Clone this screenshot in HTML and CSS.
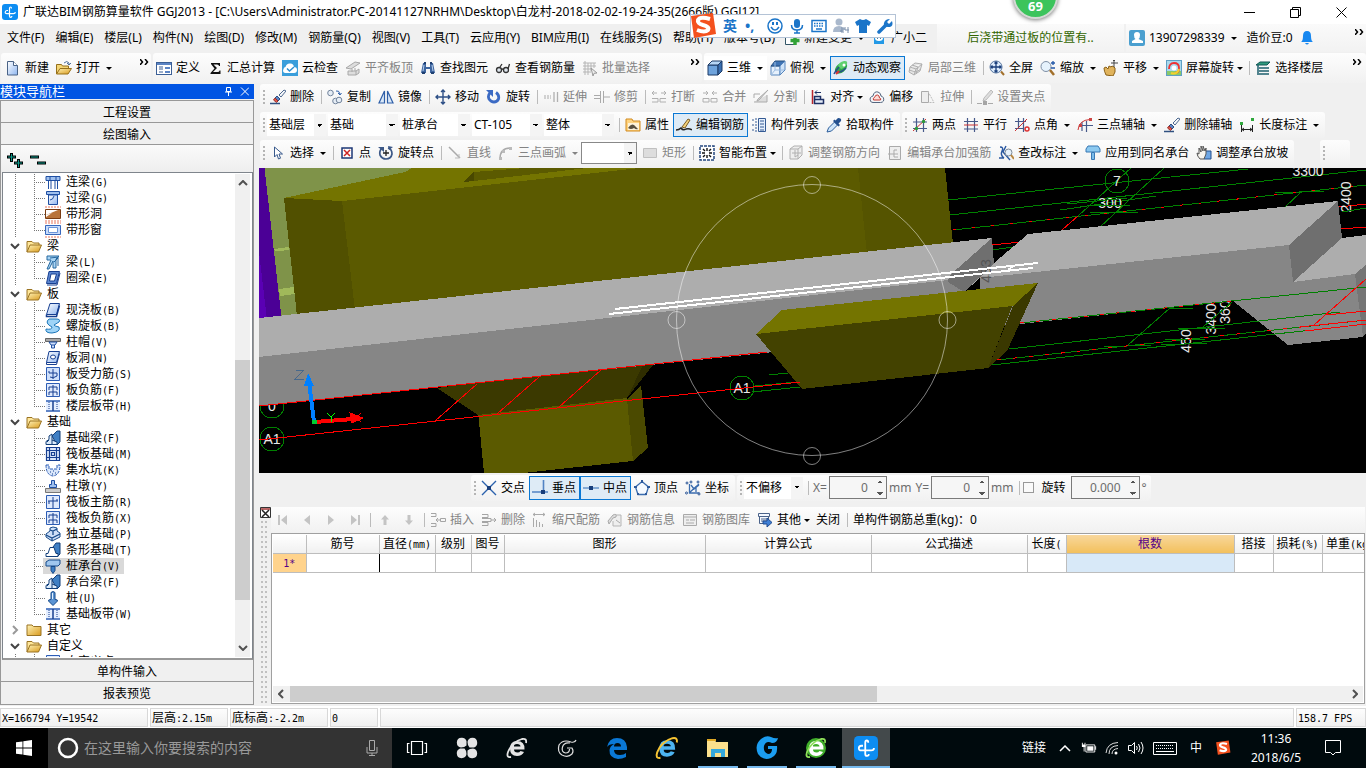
FILE: index.html
```html
<!DOCTYPE html>
<html lang="zh-CN">
<head>
    <meta charset="utf-8">
    <title>广联达BIM钢筋算量软件 GGJ2013</title>
    <link rel="stylesheet" href="styles.css">
</head>
<body>

<!-- icon sprite -->
<svg class="sprite" aria-hidden="true">
    <defs>
        <linearGradient id="gFold" x1="0" y1="0" x2="1" y2="1"><stop offset="0" stop-color="#fff3b8"/><stop offset="1" stop-color="#d99a1c"/></linearGradient>
        <linearGradient id="gBlue" x1="0" y1="0" x2="1" y2="1"><stop offset="0" stop-color="#fff"/><stop offset="1" stop-color="#8fb6f0"/></linearGradient>
    </defs>
    <symbol id="app" viewBox="0 0 16 16"><rect width="16" height="16" rx="3" fill="#0d8df2"/><path d="M9.500 4.500Q9.500 3 8.500 3T7.500 4.500V12q0 1.300 1.200 1.300T9.800 12M6 6.500H5Q3.200 6.700 3.200 8.200T5 9.600h6.500q1.800 0 1.800-1.600" fill="none" stroke="#fff" stroke-width="1.200"/></symbol>
    <symbol id="new" viewBox="0 0 16 16"><path d="M2.500 1.500h6l4 4v9.500h-10z" fill="url(#gBlue)" stroke="#4a6386"/><path d="M8.500 1.500v4h4" fill="#fff" stroke="#4a6386"/></symbol>
    <symbol id="open" viewBox="0 0 16 16"><path d="M.5 14V4.500h5l1 1.500h6v3" fill="#f4d574" stroke="#96701b"/><path d="M.5 14L4 8.500h11.500L12 14z" fill="url(#gFold)" stroke="#96701b"/><path d="M8 3q3-3 5 0v2m-2-2l2 2 2-2" fill="none" stroke="#4d6f9c"/></symbol>
    <symbol id="define" viewBox="0 0 16 16"><rect x=".5" y="2.500" width="15" height="12" fill="#fff" stroke="#3b5f96"/><path d="M1 3h14v2H1z" fill="#5b84c4"/><path d="M3 7h4M3 9h4M3 12h4" stroke="#3b5f96"/><path d="M9 7h5v2H9zM9 11h5v2H9z" fill="#5b84c4"/></symbol>
    <symbol id="sigma" viewBox="0 0 16 16"><path d="M4 3h9v3h-1q0-1.500-2-1.500H6.500L10 8l-4 4h4.500q2 0 2-1.500h1V14H3.500v-1L7.500 8.500 4 4z" fill="#111"/></symbol>
    <symbol id="cloud" viewBox="0 0 16 16"><rect width="16" height="16" fill="#3a9edb"/><path d="M3 13q-3-1-1.500-4 .5-2 2-2 1-4 5-3.500 3 0 3.500 3.500 3 0 3 3t-3 3z" fill="#fff"/><path d="M5 8.500l2.500 2.500L12 7" fill="none" stroke="#2f8fd0" stroke-width="1.500"/></symbol>
    <symbol id="flat" viewBox="0 0 16 16"><path d="M1 8L10 2l5 1-9 6zM3 11h8v4H3zM11 11l3-2v4l-3 2M7 9v3M10 8v3" fill="#ddd" stroke="#a8a8a8"/></symbol>
    <symbol id="bino" viewBox="0 0 16 16"><path d="M3 3h3v4h4V3h3l2 10h-5v-4H6v4H1z" fill="#3c649e"/><path d="M4 2h2v2H4zM10 2h2v2h-2zM2 12h3v2H2zM11 12h3v2h-3z" fill="#1f3f70"/><path d="M4 5l-1 6M12 5l1 6" stroke="#b9d0ee"/></symbol>
    <symbol id="glass" viewBox="0 0 16 16"><g fill="#dfe6ee" stroke="#333" stroke-width="1.300"><circle cx="4" cy="10" r="2.500"/><circle cx="11" cy="10" r="2.500"/><path d="M6.500 9.500q1-1 2 0M5 7l2-3M13 9l1.500-5" fill="none"/></g></symbol>
    <symbol id="batch" viewBox="0 0 16 16"><path d="M1 3h13M1 6h13M1 9h8M1 12h8M3 1v14M6 3v12M9 3v8M12 3v5" stroke="#b5b5b5"/><path d="M9 8l6 5-3 .3-1 2.700z" fill="#eee" stroke="#999"/></symbol>
    <symbol id="cube" viewBox="0 0 16 16"><path d="M1 5h10v10H1z" fill="#6ea3dc" stroke="#1d3b66"/><path d="M1 5l4-4h10l-4 4z" fill="#b7d6f5" stroke="#1d3b66"/><path d="M11 5l4-4v10l-4 4z" fill="#3b6fb0" stroke="#1d3b66"/></symbol>
    <symbol id="topview" viewBox="0 0 16 16"><path d="M1 6h9v9H1z" fill="#e7f1fc" stroke="#5685bd"/><path d="M1 6l4-5h10l-5 5z" fill="#3f74b5" stroke="#28507f"/><path d="M10 6l5-5v9l-5 5z" fill="#cfe3f8" stroke="#5685bd"/><path d="M5 2v8h9M5 10l-4 5" fill="none" stroke="#9dbde2"/></symbol>
    <symbol id="orbit" viewBox="0 0 16 16"><ellipse cx="8" cy="8" rx="7" ry="4.500" transform="rotate(-40 8 8)" fill="#2ea84c"/><path d="M5 6q1-4 6-5 4-.5 3 3-2 4-6 5" fill="#5fd070"/><path d="M1 14q2-4 5-7M2 11q5 3 11-3" fill="none" stroke="#274d8a" stroke-width="1.500"/><circle cx="11" cy="5" r="1.500" fill="#fff"/><path d="M3 14l3-3" stroke="#d33" stroke-width="2"/></symbol>
    <symbol id="part3d" viewBox="0 0 16 16"><path d="M2 7l5-4 7 1-2 7-6 4-5-3zM2 7l6 2 6-5M8 9l-2 6M4 5l6 2-2 7M1 10l7 2 5-3" fill="#e5e5e5" stroke="#b0b0b0"/></symbol>
    <symbol id="full" viewBox="0 0 16 16"><circle cx="7" cy="7" r="6" fill="#dcebfb" stroke="#52719c"/><path d="M7 2v10M2 7h10M5.500 3.500L7 2l1.500 1.500M5.500 10.500L7 12l1.500-1.500M3.500 5.500L2 7l1.500 1.500M10.500 5.500L12 7l-1.500 1.500" fill="none" stroke="#1b3f7c" stroke-width="1.300"/><path d="M12 11.500l3 3.500" stroke="#a2702b" stroke-width="2"/></symbol>
    <symbol id="zoom" viewBox="0 0 16 16"><circle cx="6" cy="6.500" r="5" fill="#e6f2fc" stroke="#7e8fa5"/><path d="M10 10l4 5" stroke="#a2702b" stroke-width="2.500"/><path d="M13 1v4M11 3h4M11 8h4" stroke="#2458a8" stroke-width="1.300"/></symbol>
    <symbol id="pan" viewBox="0 0 16 16"><path d="M3 15q-2-4-2-7l2-1 2 2 1-3 2 1 1-1 2 1 1 1v4l-2 4z" fill="#e0b35c" stroke="#8b6117"/><path d="M11 0v7M8 3h7M10 1l1-1 1 1" stroke="#444" fill="none"/></symbol>
    <symbol id="screenrot" viewBox="0 0 16 16"><rect x=".5" y=".5" width="15" height="15" fill="#a9d9ee" stroke="#5fa0c4"/><path d="M1 11h14v4H1z" fill="#8ac96a"/><path d="M3 9q0-6 5-6 5 0 5 5t-4 5" fill="none" stroke="#e33" stroke-width="1.800"/><path d="M5 13q6 2 8-4" fill="none" stroke="#f3d12e" stroke-width="2"/><circle cx="8" cy="8" r="2.500" fill="#fff"/></symbol>
    <symbol id="floors" viewBox="0 0 16 16"><path d="M1 5l4-3h10l-3 3z" fill="#2f9a7c" stroke="#155"/><path d="M4 8h10M4 11h10M4 14h10M3 5v10" stroke="#1d5f6e" stroke-width="1.500"/></symbol>
    <symbol id="brush" viewBox="0 0 16 16"><path d="M9 6l5-5 2 1-5 6z" fill="#f5f7fa" stroke="#4e688f"/><path d="M7 7l3 3-2 2-3-3z" fill="#5b83c2" stroke="#2d4c80"/><path d="M5 9l3 3-1.500 1.500L3.500 11z" fill="#e0574c" stroke="#98302a"/><path d="M0 14.500h10" stroke="#2f5080" stroke-width="1.500"/></symbol>
    <symbol id="copy" viewBox="0 0 16 16"><circle cx="3.500" cy="4" r="2.800" fill="#e6edf5" stroke="#71839b"/><circle cx="8.500" cy="12" r="2.800" fill="#e6edf5" stroke="#71839b"/><circle cx="12" cy="11" r="2.800" fill="#e6edf5" stroke="#71839b"/><path d="M9 2q3-1 4 3m-2-1l2 2 1.500-2" fill="none" stroke="#2f5fa8"/></symbol>
    <symbol id="mirror" viewBox="0 0 16 16"><path d="M6.500 2v12H1zM9.500 2v12H15z" fill="#dbe9f9" stroke="#2f5fa8" stroke-width="1.200"/></symbol>
    <symbol id="move" viewBox="0 0 16 16"><path d="M8 1v14M1 8h14M6 3l2-2 2 2M6 13l2 2 2-2M3 6L1 8l2 2M13 6l2 2-2 2" fill="none" stroke="#2d4f86" stroke-width="1.400"/></symbol>
    <symbol id="rotate" viewBox="0 0 16 16"><path d="M4 4q-2.500 2.500-1 6 2 3 5 3t4.500-3q1-4-2.500-6.500" fill="none" stroke="#3c6bc4" stroke-width="2.800"/><path d="M0 1h7v7z" fill="#3c6bc4"/></symbol>
    <symbol id="extend" viewBox="0 0 16 16"><path d="M1 7h7M1 9h7" stroke="#aaa" stroke-dasharray="2 1"/><path d="M11 3v10M14.500 3v10" stroke="#b0b0b0" stroke-width="1.300"/></symbol>
    <symbol id="trim" viewBox="0 0 16 16"><path d="M0 6.500h6M0 9.500h6M6.500 2v12M9.500 2v12M10 8h6" stroke="#aaa"/></symbol>
    <symbol id="break" viewBox="0 0 16 16"><path d="M1 4h5M10 4h5M3 2L1 4l2 2M13 2l2 2-2 2M1 9.500h6V13H1M15 9.500H9V13h6" fill="none" stroke="#b0b0b0"/></symbol>
    <symbol id="join" viewBox="0 0 16 16"><path d="M1 4h5M10 4h5M4 2l2 2-2 2M12 2l-2 2 2 2M1 9.500h6V13H1zM15 9.500H9V13h6z" fill="none" stroke="#b0b0b0"/></symbol>
    <symbol id="split" viewBox="0 0 16 16"><path d="M1 5h6M1 13h13V6M1 5v4M15 1L6 11l-2 1 1-2z" fill="#ddd" stroke="#aaa"/></symbol>
    <symbol id="align" viewBox="0 0 16 16"><path d="M2.500 1v14" stroke="#b8252b" stroke-width="1.500"/><path d="M5 3.500h6M5 3.500l2-2M5 3.500l2 2" fill="none" stroke="#1d2f63"/><path d="M4.500 7.500h6v3h-6zM4.500 10.500h9v4h-9z" fill="#e4ecf8" stroke="#1d2f63" stroke-width="1.500"/></symbol>
    <symbol id="offset" viewBox="0 0 16 16"><path d="M1.500 12Q0 8 4 7q1-5 5-4 3 1 3 4 3.500 1 2.500 5-1 1.500-3 1.500H4Q2 13.500 1.500 12z" fill="#f4f6f9" stroke="#53667f"/><path d="M4.500 11q-1-2 1-2.500Q6.500 5.500 8.500 6t2 3q2 .5 1 2z" fill="#fbdcd8" stroke="#c43b33"/></symbol>
    <symbol id="stretch" viewBox="0 0 16 16"><path d="M1.500 2.500h7v11h-7z" fill="#eee" stroke="#aaa"/><path d="M8 2.500l6 11H9" fill="none" stroke="#bbb" stroke-dasharray="2 1"/></symbol>
    <symbol id="grip" viewBox="0 0 16 16"><path d="M14 1L7 9l-1 3 3-1 7-8z" fill="#ddd" stroke="#bbb"/><path d="M0 14.500h5M11 14.500h5" stroke="#aaa"/><path d="M6 12h4v4H6z" fill="#a5a5a5"/></symbol>
    <symbol id="prop" viewBox="0 0 16 16"><path d="M1 2h6l1 2h7v10H1z" fill="#ffd480" stroke="#d18a1e"/><path d="M3 6h11v7H3z" fill="#fff3d8"/><path d="M3 11q3-5 6-3l4 4q-2 1-4-1-3 2-6 0" fill="#5a5140"/></symbol>
    <symbol id="pen" viewBox="0 0 16 16"><path d="M6 10l6-8 2 1-5 8z" fill="#f3d27a" stroke="#7b5a23"/><path d="M0 13q3 0 5-2 2 3 5 1 3-1 6 1" fill="none" stroke="#222" stroke-width="1.500"/></symbol>
    <symbol id="list" viewBox="0 0 16 16"><path d="M1 3h3M1 8h3M1 13h3M5 1v14" stroke="#345a94" stroke-dasharray="2 1"/><path d="M7.500 1.500h7v13h-7z" fill="#e5effc" stroke="#345a94"/><path d="M9 4h4M9 7h4M9 10h4M9 13h4" stroke="#345a94"/></symbol>
    <symbol id="pick" viewBox="0 0 16 16"><path d="M1 15l1.500-4 6-6 3 3-6 6z" fill="#cfe6fb" stroke="#2e5e9b"/><path d="M7 4l5.500 5.500 1.500-1.500-1.500-1.500L15 4q1-3-3-3L9.500 3.500 8.500 2.500z" fill="#24508f"/></symbol>
    <symbol id="ax2" viewBox="0 0 16 16"><path d="M4.500 1v14M11.500 1v14M1 5h14M1 11.500h14" stroke="#47598a" stroke-width="1.200"/><path d="M1 14L14 2" stroke="#c33"/><circle cx="4.500" cy="11.500" r="1.700" fill="#2b9a3a"/><circle cx="11.500" cy="4.500" r="1.700" fill="#2b9a3a"/></symbol>
    <symbol id="axpar" viewBox="0 0 16 16"><path d="M4.500 1v14M11.500 1v14M1 4.500h14M1 12h14" stroke="#47598a" stroke-width="1.200"/><path d="M1 8h14" stroke="#c33"/></symbol>
    <symbol id="axang" viewBox="0 0 16 16"><path d="M4.500 1v10M9.500 1v14M1 4.500h11M1 11.500h9" stroke="#47598a" stroke-width="1.200"/><path d="M1 14L13 2" stroke="#c33"/><circle cx="13" cy="12" r="2" fill="none" stroke="#d33" stroke-width="1.500"/></symbol>
    <symbol id="ax3" viewBox="0 0 16 16"><path d="M9.500 4v11M4 8.500h12M5 5v9" stroke="#47598a" stroke-width="1.200"/><path d="M1 13Q2 3 13 2.500" fill="none" stroke="#c33"/><path d="M2 7h3v3H2zM12 1h3v3h-3z" fill="#c44"/></symbol>
    <symbol id="dim" viewBox="0 0 16 16"><path d="M2.500 8v7M13.500 8v7M3 12.500h10M5 11l-2 1.500L5 14M11 11l2 1.500-2 1.500" fill="none" stroke="#222"/><path d="M1 5h3v3H1zM12 1h3v3h-3z" fill="#2fa83c"/></symbol>
    <symbol id="arrow" viewBox="0 0 16 16"><path d="M4.500 2v10l2.500-2.500L8.500 14l2-.8L9 9h3.500z" fill="#fff" stroke="#38598c"/></symbol>
    <symbol id="point" viewBox="0 0 16 16"><path d="M3 3h10v10H3z" fill="#fff" stroke="#1d3775" stroke-width="1.500"/><path d="M5 5l6 6M11 5l-6 6" stroke="#c22" stroke-width="1.500"/></symbol>
    <symbol id="rotpt" viewBox="0 0 16 16"><path d="M4 3Q1 6 2 10q2 4 6 4 5 0 6-5 0-5-4-6" fill="none" stroke="#3c5887" stroke-width="1.700"/><path d="M0 2h6v5M15 2l-5-1 1 4z" fill="#3c5887"/><path d="M8 5v6M5 8h6" stroke="#222" stroke-width="1.300"/></symbol>
    <symbol id="line" viewBox="0 0 16 16"><path d="M2 2l11 11" stroke="#aaa" stroke-width="1.500"/><path d="M12 9v4H8" fill="none" stroke="#bbb"/></symbol>
    <symbol id="arc" viewBox="0 0 16 16"><path d="M2 14Q2 3 12 3" fill="none" stroke="#aaa" stroke-width="1.500"/><path d="M1 12h3v3H1zM4 5h3v3H4zM11 2h3v3h-3z" fill="#bbb"/></symbol>
    <symbol id="rect" viewBox="0 0 16 16"><path d="M1.500 3.500h13v9h-13z" fill="#ddd" stroke="#c0c0c0"/></symbol>
    <symbol id="smart" viewBox="0 0 16 16"><rect x="1" y="1" width="14" height="14" fill="#fff" stroke="#24477f" stroke-width="1.500" stroke-dasharray="3 1"/><path d="M8 3v3M8 10v3M3 8h3M10 8h3M4 4l2 2M12 4l-2 2M4 12l2-2M12 12l-2-2" stroke="#111" stroke-width="1.400"/></symbol>
    <symbol id="rebar" viewBox="0 0 16 16"><path d="M2 4l4-3h8v9l-4 4H2zM2 4h8v10M10 4l4-3M4 8h9M7 5v7l3-2" fill="#eee" stroke="#b0b0b0"/></symbol>
    <symbol id="strong" viewBox="0 0 16 16"><path d="M2.500 1.500h11v13h-11zM1 9h10M7 5v7h4M7 5h3" fill="#eee" stroke="#aaa"/></symbol>
    <symbol id="check" viewBox="0 0 16 16"><path d="M2 2q4 0 2 4T6 13M8 1L5 7l7 8M1 13h5" fill="none" stroke="#2957a0" stroke-width="1.400"/><circle cx="10.500" cy="7.500" r="3.500" fill="#e6f1fb" stroke="#7c8896"/><path d="M13 10l3 4" stroke="#b98740" stroke-width="2"/></symbol>
    <symbol id="cap" viewBox="0 0 16 16"><path d="M1 4l2-3h10l2 3v3H1z" fill="#8cc9f0" stroke="#3878b4"/><path d="M6.500 7.500h3v7h-3z" fill="#7bbcea" stroke="#3878b4"/></symbol>
    <symbol id="slope" viewBox="0 0 16 16"><path d="M8 6h7v8H8z" fill="#6ea6e4" stroke="#234f8c"/><path d="M4 14q-3-3-3-6l2 1V3l2 4V1l2 5V1l2 5 1-3v6l-2 5z" fill="#f6f4ef" stroke="#555"/></symbol>
    <symbol id="cross" viewBox="0 0 16 16"><path d="M1 1l14 14M15 1L1 15" stroke="#2b62ad" stroke-width="1.400"/><path d="M6 6h4v4H6z" fill="#183e7b"/></symbol>
    <symbol id="perp" viewBox="0 0 16 16"><path d="M11.500 0v12M0 12h16" stroke="#5183c4" stroke-width="1.600"/><path d="M9 10h4v4H9z" fill="#183e7b"/></symbol>
    <symbol id="mid" viewBox="0 0 16 16"><path d="M0 8h16" stroke="#6d9ace" stroke-width="1.600"/><path d="M6 6h4v4H6z" fill="#183e7b"/></symbol>
    <symbol id="vertex" viewBox="0 0 16 16"><path d="M8 1.500L14.500 7 12 14.500H4L1.500 7z" fill="#f6faff" stroke="#3b6cae" stroke-width="1.300"/><path d="M7 0h2v3H7zM0 6h3v2H0zM13 6h3v2h-3zM3 13h2v2H3zM11 13h2v2h-2z" fill="#2d599b"/></symbol>
    <symbol id="coord" viewBox="0 0 16 16"><path d="M4.500 4v9h10M4 13L14 4M6 5l3 4 5-4M11 6v6" fill="none" stroke="#3b6cae" stroke-width="1.300"/><g fill="#fff" stroke="#244f92"><circle cx="2" cy="3" r="1"/><circle cx="6" cy="2" r="1"/><circle cx="13" cy="2" r="1"/><circle cx="1.500" cy="13" r="1"/><circle cx="14" cy="14" r="1"/></g></symbol>
    <symbol id="first" viewBox="0 0 16 16"><path d="M3 3h2v10H3zM12 3v10L6 8z" fill="#c4c4c4"/></symbol>
    <symbol id="prev" viewBox="0 0 16 16"><path d="M11 3v10L5 8z" fill="#c4c4c4"/></symbol>
    <symbol id="next" viewBox="0 0 16 16"><path d="M5 3v10l6-5z" fill="#c4c4c4"/></symbol>
    <symbol id="last" viewBox="0 0 16 16"><path d="M11 3h2v10h-2zM4 3v10l6-5z" fill="#c4c4c4"/></symbol>
    <symbol id="up" viewBox="0 0 16 16"><path d="M8 3l4 4.500h-2.500V13h-3V7.500H4z" fill="#c4c4c4"/></symbol>
    <symbol id="down" viewBox="0 0 16 16"><path d="M8 13l4-4.500h-2.500V3h-3v5.500H4z" fill="#c4c4c4"/></symbol>
    <symbol id="insert" viewBox="0 0 16 16"><path d="M1 1.500h5v3H1M1 11.500h5v3H1M10.500 6.500h5v3h-5zM6 8h4M8 6L6 8l2 2" fill="none" stroke="#a5a5a5"/></symbol>
    <symbol id="delrow" viewBox="0 0 16 16"><path d="M1 2.500h6v3H1M1 10.500h6v3H1M1 6.500h9v3H1M10 8h5M13 6l2 2-2 2" fill="none" stroke="#a5a5a5"/></symbol>
    <symbol id="scale" viewBox="0 0 16 16"><path d="M1 2.500h12M3 1L1 2.500 3 4M11 1l2 1.500L11 4M1.500 6v9M4.500 8v7M7.500 10v5M10.500 12v3" fill="none" stroke="#aaa"/></symbol>
    <symbol id="info" viewBox="0 0 16 16"><path d="M8 3h6v11H6V9" fill="#eee" stroke="#b5b5b5"/><path d="M1 9l5-6q4-2 3 2l-3 1-4 6zM9 8l4 3" fill="#ddd" stroke="#aaa"/></symbol>
    <symbol id="lib" viewBox="0 0 16 16"><path d="M1.500 2.500h13v11h-13zM2 5h12M4 8h3M8 8h5M4 11h8" fill="#eee" stroke="#aaa"/></symbol>
    <symbol id="other" viewBox="0 0 16 16"><path d="M1.500 1.500h11v3h-11zM2.500 4.500h9v7h-9zM4 7h6M4 9h6" fill="#f5f9ff" stroke="#4b638a"/><path d="M6 9h4V6l5 4.500L10 15v-3H6z" fill="#3f7fd6" stroke="#1f4b90"/></symbol>
    <symbol id="newchg" viewBox="0 0 16 16"><path d="M1.500 1.500h10v13h-10z" fill="#fff" stroke="#356"/><path d="M11 6v9M6.500 10.500h9" stroke="#31a236" stroke-width="3.500"/></symbol>
    <symbol id="robot" viewBox="0 0 16 16"><path d="M1 4h3l2-2h4l2 2h3v4h-2v6H3V8H1z" fill="#2399e6"/><ellipse cx="8" cy="8" rx="4" ry="3" fill="#fff"/><path d="M6 8h1M9 8h1" stroke="#157" stroke-width="1.500"/></symbol>
    <symbol id="user" viewBox="0 0 16 16"><rect width="16" height="16" rx="2" fill="#4a9fcf"/><path d="M8 2q3 0 3 3t-1.500 4L14 11v2H3v-2l3.500-2Q5 8 5 5t3-3z" fill="#fff"/></symbol>
    <symbol id="bell" viewBox="0 0 16 16"><path d="M2 12q2-1 2-6 0-5 4-5t4 5q0 5 2 6z" fill="#1787f0"/><path d="M6 13h4q-2 3-4 0z" fill="#1787f0"/></symbol>

    <!-- tree -->
    <symbol id="t-open" viewBox="0 0 16 16"><path d="M1 14V3.500h5l1.500 1.500H13V8" fill="#ffe79a" stroke="#9a7322"/><path d="M1 14l3-7h11.500L12.500 14z" fill="url(#gFold)" stroke="#9a7322"/></symbol>
    <symbol id="t-shut" viewBox="0 0 16 16"><path d="M1 13.500V3h5l1.500 1.500H15v9z" fill="url(#gFold)" stroke="#9a7322"/></symbol>
    <symbol id="t-link" viewBox="0 0 16 16"><path d="M1 2.500h14v4H1z" fill="#9fc0ee" stroke="#1f4fa3"/><path d="M3.500 6v9M6 6v9M10 6v9M12.500 6v9M5 2v4M11 2v4" stroke="#1f4fa3"/></symbol>
    <symbol id="t-lintel" viewBox="0 0 16 16"><path d="M1.500 1.500h13v3h-13z" fill="#9fc0ee" stroke="#1f4fa3"/><path d="M3.500 5h9v9.500h-9z" fill="url(#gBlue)" stroke="#1f4fa3"/><path d="M5 10q3 0 4-4" fill="none" stroke="#1f4fa3"/></symbol>
    <symbol id="t-hole" viewBox="0 0 16 16"><path d="M0 1h16M0 15h16" stroke="#f3b9ad" stroke-width="2" stroke-dasharray="2 1"/><path d="M.5 3.500h15v9H.5z" fill="#fff" stroke="#7a3c12"/><path d="M1 9l12-5h2v8H1z" fill="#b8733a"/><path d="M1 9l6-2-6 4z" fill="#fff"/></symbol>
    <symbol id="t-window" viewBox="0 0 16 16"><path d="M0 1h16M0 15h16" stroke="#f3b9ad" stroke-width="2" stroke-dasharray="2 1"/><path d="M.5 3.500h15v9H.5z" fill="#c9dcfa" stroke="#3767bd"/><path d="M3.500 5.500h9v5h-9z" fill="#fff" stroke="#6b94d8"/></symbol>
    <symbol id="t-beam" viewBox="0 0 16 16"><path d="M2 2h12l-3 3v9H8V7l-4 8H2l4-9H2z" fill="#a9d4f4" stroke="#27689f"/><path d="M5 4l9-1M9 8l4-4v8" stroke="#27689f" fill="none"/></symbol>
    <symbol id="t-ring" viewBox="0 0 16 16"><path d="M4 1.500h10.500l-3 12H1.500z" fill="#5d87d0" stroke="#173f91"/><path d="M6 4h5.500l-2 7H4.500z" fill="#fff" stroke="#173f91"/><path d="M2 15h10l3-12" fill="none" stroke="#173f91"/></symbol>
    <symbol id="t-slab" viewBox="0 0 16 16"><path d="M5 1.500h9.500l-3 11H1.500z" fill="url(#gBlue)" stroke="#173f91"/><path d="M1.500 12.500v2h10l3-11" fill="none" stroke="#173f91" stroke-width="1.500"/></symbol>
    <symbol id="t-spiral" viewBox="0 0 16 16"><path d="M4 1h7q5 0 3 3l-5 3q0 1 5 2 2 5-7 6Q0 15 1 11q6 1 6-2Q-1 5 4 1z" fill="#9ed4f7" stroke="#1d76b9"/></symbol>
    <symbol id="t-cap" viewBox="0 0 16 16"><path d="M.5 4.500h15v3H.5z" fill="#a8a8a8" stroke="#666"/><path d="M4 8h8l-2 3H6zM6.500 11v3h3v-3" fill="#cfe0fa" stroke="#1f4fa3"/></symbol>
    <symbol id="t-slabhole" viewBox="0 0 16 16"><path d="M4 1.500h10.500l-3 11H1.500z" fill="url(#gBlue)" stroke="#173f91"/><path d="M1.500 12.500v2h10l3-11" fill="none" stroke="#173f91"/><ellipse cx="8" cy="7" rx="2.500" ry="2" fill="#fff" stroke="#173f91"/></symbol>
    <symbol id="t-force" viewBox="0 0 16 16"><path d="M1.500 1.500h13v13h-13z" fill="#cfe0fb" stroke="#2d5db5"/><path d="M8 3v10M4 5v2h8v3q-4 3-7 1" fill="none" stroke="#173f91"/></symbol>
    <symbol id="t-neg" viewBox="0 0 16 16"><path d="M1.500 1.500h13v13h-13z" fill="#dfeafd" stroke="#2d5db5"/><path d="M4 5h8M4 10h8M8 3v11M4 5v3M12 5v3M4 10v3M12 10v3" stroke="#173f91"/></symbol>
    <symbol id="t-strip" viewBox="0 0 16 16"><path d="M1 3h14v9H1z" fill="#e4eeff"/><path d="M1 3h14M1 13h14" stroke="#2d5db5" stroke-width="1.600"/><path d="M4 4v8M12 4v8" stroke="#173f91" stroke-dasharray="1 1"/><path d="M8 3v10" stroke="#173f91" stroke-width="1.500"/></symbol>
    <symbol id="t-fbeam" viewBox="0 0 16 16"><path d="M7 6l5-5h3v11l-3 3z" fill="#3f7fc4" stroke="#123e78"/><path d="M1 14.500v-3l3-2V6l3-2v6l5 2v2.500z" fill="#dcebfb" stroke="#123e78"/><path d="M4 10l-2 2M7 10v4" stroke="#123e78"/></symbol>
    <symbol id="t-raft" viewBox="0 0 16 16"><path d="M1.500 1.500h13v13h-13zM4.500 1v14M11.500 1v14M1 4.500h14M1 11.500h14M6.500 6.500h3v3h-3z" fill="#dce8fb" stroke="#173f91" stroke-width="1.200"/></symbol>
    <symbol id="t-pit" viewBox="0 0 16 16"><path d="M1 3h3v4h8V3h3q0 10-7 11Q1 13 1 3z" fill="#d9e7fb" stroke="#2d5db5" stroke-dasharray="3 1"/><path d="M5 10h1M8 9h1M10 11h1M7 12h1" stroke="#173f91"/></symbol>
    <symbol id="t-pier" viewBox="0 0 16 16"><path d="M6.500 2.500h3v4h2v3h-7v-3h2z" fill="#9fc0ee" stroke="#1f4fa3"/><path d="M.5 10.500h15v4H.5z" fill="#ccc" stroke="#777"/></symbol>
    <symbol id="t-main" viewBox="0 0 16 16"><path d="M1.500 1.500h13v13h-13z" fill="#dfeafd" stroke="#2d5db5"/><path d="M8 3v11M3 7h10M4 7v3M12 7V5" stroke="#173f91"/></symbol>
    <symbol id="t-found" viewBox="0 0 16 16"><path d="M1 8l4-3V2l3-1 4 1v3l3 2v4l-8 4-6-4z" fill="#cfe0f8" stroke="#174a8a"/><path d="M5 4l3 1 4-2M8 5v4M1 9l6 3 8-4M7 12v3" fill="none" stroke="#174a8a" stroke-width="1.300"/></symbol>
    <symbol id="t-stripf" viewBox="0 0 16 16"><path d="M8 5l3-4h4v11l-3 3z" fill="#3f7fc4" stroke="#123e78"/><path d="M1 14.500v-3h2l2-6h4l2 6h2v3z" fill="#fff" stroke="#123e78"/></symbol>
    <symbol id="t-pilecap" viewBox="0 0 16 16"><path d="M1 4l3-2h11v4l-2 2H1z" fill="#9fc6ee" stroke="#174a8a"/><path d="M6 8.500h4v4l-2 3-2-3z" fill="#3f7fc4" stroke="#174a8a"/></symbol>
    <symbol id="t-pile" viewBox="0 0 16 16"><path d="M6 2.500q2-2 4 0v7q3 0 2.500 1.500L8 15.500 3.500 11Q3 9.500 6 9.500z" fill="#5b94d4" stroke="#174a8a"/><path d="M7.500 3v6" stroke="#e3f0fc"/></symbol>

    <!-- sogou / taskbar -->
    <symbol id="sogou" viewBox="0 0 28 26"><path d="M2 3L24 0l3 21-22 4z" fill="#f4511e"/><path d="M21 6q-10-3-12 1-1 3 5 5 7 2 5 5-3 3-11 0" fill="none" stroke="#fff" stroke-width="4"/></symbol>
    <symbol id="smile" viewBox="0 0 16 16"><g fill="none" stroke="#1b75c9" stroke-width="1.500"><circle cx="8" cy="8" r="7"/><path d="M4 9q4 6 8 0"/></g><path d="M5 4h2v3H5zM9 4h2v3H9z" fill="#1b75c9"/></symbol>
    <symbol id="mic" viewBox="0 0 16 16"><rect x="5" y="1" width="6" height="9" rx="3" fill="#1b75c9"/><path d="M2.500 7q0 5 5.500 5t5.500-5M8 12v3M5 15h6" fill="none" stroke="#1b75c9" stroke-width="1.500"/></symbol>
    <symbol id="kbd" viewBox="0 0 16 16"><path d="M1 2.500h14v11H1z" fill="none" stroke="#1b75c9" stroke-width="1.500"/><path d="M3 5.500h10M3 8h10" stroke="#1b75c9" stroke-width="1.500" stroke-dasharray="1.500 1"/><path d="M5 11h6" stroke="#1b75c9" stroke-width="1.500"/></symbol>
    <symbol id="man" viewBox="0 0 16 16"><circle cx="6" cy="4" r="3.500" fill="#a9b8cc"/><path d="M0 14q0-6 6-6 3 0 4 2v4z" fill="#a9b8cc"/><path d="M8 10h3v2H8v2h3M15 9v6M12 9v3h4" fill="none" stroke="#7b8fab"/></symbol>
    <symbol id="shirt" viewBox="0 0 16 16"><path d="M5 1q3 2 6 0l5 3-2 4-2-1v8H4V7L2 8 0 4z" fill="#1b75c9"/></symbol>
    <symbol id="wrench" viewBox="0 0 16 16"><path d="M2 14l7-7" stroke="#1b75c9" stroke-width="3.500" stroke-linecap="round"/><path d="M13 1l-3 3 2 2 3-3q2 6-4 6-5 0-4-4 1-4 6-4z" fill="#1b75c9"/></symbol>
    <symbol id="win" viewBox="0 0 16 16"><path d="M0 2.300L6.500 1.400v6.200H0zM7.300 1.300L16 0v7.600H7.300zM0 8.400h6.500v6.200L0 13.700zM7.300 8.400H16V16l-8.700-1.300z" fill="#fff"/></symbol>
    <symbol id="ring" viewBox="0 0 22 22"><circle cx="11" cy="11" r="9" fill="none" stroke="#fff" stroke-width="2.500"/></symbol>
    <symbol id="micline" viewBox="0 0 16 16"><path d="M5.500.5h5v10h-5zM3 7v6h10V7M8 13v3M5 15.500h6" fill="none" stroke="#aaa"/></symbol>
    <symbol id="taskview" viewBox="0 0 22 16"><path d="M5.500 1.500h11v13h-11zM3.500 3.500h-2v9h2M18.500 3.500h2v9h-2" fill="none" stroke="#fff" stroke-width="1.200"/></symbol>
    <symbol id="fan" viewBox="0 0 22 22"><g fill="#e4e4e4"><path d="M10.500 4Q9 .5 5.500.8 1 1 .8 5.500 1 10 5 10.500q3.500 0 5.500-2z"/><path d="M18 10.500q3.500-1.500 3.200-5Q21 1 16.500.8 12 1 11.500 5q0 3.500 2 5.500z"/><path d="M11.500 18q1.500 3.500 5 3.200 4.500-.2 4.700-4.700-.2-4.500-4.200-5-3.500 0-5.500 2z"/><path d="M4 11.500Q.5 13 .8 16.500 1 21 5.500 21.200 10 21 10.500 17q0-3.500-2-5.500z"/></g></symbol>
    <symbol id="ieface" viewBox="0 0 22 22"><path d="M18 15q-2 4-7 4-7 0-7-7.500T11 4q8 0 7.500 8.500H8q0 3 3.500 3 2 0 3-1.500l3.500 1zM8 9.500h6.500Q14.500 7 11 7T8 9.500z" fill="currentColor" fill-rule="evenodd"/></symbol>
    <symbol id="iering" viewBox="0 0 22 22"><path d="M20 6q1-5-4-4Q6 5 2 15q-2 6 3 5" fill="none" stroke="currentColor" stroke-width="1.800"/></symbol>
    <symbol id="gline" viewBox="0 0 22 22"><path d="M20 3q-1 3-5 2Q7 2 3 8q-2 7 3 10 6 3 10-1 2-3 0-6h-5M14 6Q8 5 6.500 10t3 6q4 0 4-4" fill="none" stroke="#ddd" stroke-width="1.200"/></symbol>
    <symbol id="gfull" viewBox="0 0 24 24"><path d="M23 2q-1 5-6 5-6-3-8 3-1 6 4 8 4 0 4-5h-4v-3h9q1 9-6 12-8 3-13-4-4-9 3-15 5-4 10-2 4 2 7 1z" fill="#1b9df0"/></symbol>
    <symbol id="edge" viewBox="0 0 22 22"><path d="M1 10Q3 1 11 1q9 0 10 9v3H8q0 5 6 5 4 0 6-2v4q-4 2-8 2-9-1-8.500-9Q4 9 8 7q-5 0-7 3zM8 9.500h7Q15 6 11.500 6 8 6 8 9.500z" fill="#0a78d6" fill-rule="evenodd"/></symbol>
    <symbol id="files" viewBox="0 0 22 20"><path d="M0 2h8l1 2h12v15H0z" fill="#fbe08c"/><path d="M0 1h9v2H0z" fill="#e0a925"/><path d="M4 19v-8h14v8h-4v-4H8v4z" fill="#34a8dc"/></symbol>
    <symbol id="plug" viewBox="0 0 18 14"><path d="M5.500 3.500h10v8h-10z" fill="none" stroke="#fff"/><path d="M7 5h7v5H7zM16 5h1v4h-1zM1 3h4v3H4v5H3V6H1zM1 1h1v2H1zM4 1h1v2H4z" fill="#fff"/></symbol>
    <symbol id="wifi" viewBox="0 0 14 14"><g fill="none" stroke="#ddd"><path d="M1 12Q2 2 13 1.500M4 13q0-8 9-8.500M7 13q0-5 6-5.500"/></g><circle cx="11" cy="12" r="1.500" fill="#fff"/></symbol>
    <symbol id="speaker" viewBox="0 0 17 14"><path d="M1 4.500h3l3-3v11l-3-3H1zM9 5q1.500 2 0 4M11 3q3 4 0 8M13.500 1q4 6 0 12" fill="none" stroke="#fff"/></symbol>
    <symbol id="touchkb" viewBox="0 0 24 14"><path d="M.5 1.500h23v12H.5z" fill="none" stroke="#fff"/><path d="M3 4.500h18M3 7.500h18" stroke="#fff" stroke-dasharray="1 1"/><path d="M3 10.500h18" stroke="#fff"/></symbol>
    <symbol id="note" viewBox="0 0 16 16"><path d="M.5.500h15v12h-5L8 15l-2.500-2.500h-5z" fill="none" stroke="#fff"/></symbol>
    <symbol id="more" viewBox="0 0 9 6"><path d="M0 0l2.500 3L0 6M5 0l2.500 3L5 6" fill="none" stroke="#000" stroke-width="1.500"/></symbol>
</svg>

<header class="titlebar">
    <svg class="i16"><use href="#app"/></svg>
    <h1>广联达BIM钢筋算量软件 GGJ2013 - [C:\Users\Administrator.PC-20141127NRHM\Desktop\白龙村-2018-02-02-19-24-35(2666版).GGJ12]</h1>
    <div class="winbtns">
        <button aria-label="最小化"><svg viewBox="0 0 11 11"><path d="M0 5.500h11"/></svg></button>
        <button aria-label="还原"><svg viewBox="0 0 11 11"><path d="M.5 2.500h8v8h-8zM2.500 2V.5h8v8H9"/></svg></button>
        <button aria-label="关闭"><svg viewBox="0 0 11 11"><path d="M.5.500l10 10M10.500.500l-10 10"/></svg></button>
    </div>
</header>
<div class="ball">69</div>
<div class="ime">
    <svg class="logo"><use href="#sogou"/></svg>
    <b>英</b><b>•,</b>
    <svg class="i16"><use href="#smile"/></svg>
    <svg class="i16"><use href="#mic"/></svg>
    <svg class="i16"><use href="#kbd"/></svg>
    <svg class="i16"><use href="#man"/></svg>
    <svg class="i16"><use href="#shirt"/></svg>
    <svg class="i16"><use href="#wrench"/></svg>
</div>

<nav class="menubar">
    <div class="menus">
        <button>文件(F)</button><button>编辑(E)</button><button>楼层(L)</button><button>构件(N)</button><button>绘图(D)</button><button>修改(M)</button><button>钢筋量(Q)</button><button>视图(V)</button><button>工具(T)</button><button>云应用(Y)</button><button>BIM应用(I)</button><button>在线服务(S)</button><button>帮助(H)</button><button>版本号(B)</button>
        <button class="tool"><svg><use href="#newchg"/></svg>新建变更<i class="caret split"></i></button>
        <button class="tool"><svg><use href="#robot"/></svg>广小二</button>
    </div>
    <div class="notice"><a href="#">后浇带通过板的位置有..</a></div>
    <div class="account">
        <button class="tool"><svg><use href="#user"/></svg>13907298339<i class="caret split"></i></button>
        <span>造价豆:0</span>
        <svg class="i16"><use href="#bell"/></svg>
        <svg class="more"><use href="#more"/></svg>
    </div>
</nav>

<div class="bar main">
    <div class="group file">
        <button class="tool"><svg><use href="#new"/></svg>新建</button>
        <button class="tool"><svg><use href="#open"/></svg>打开<i class="caret split"></i></button>
        <svg class="more"><use href="#more"/></svg>
    </div>
    <div class="group define">
        <button class="tool"><svg><use href="#define"/></svg>定义</button>
        <button class="tool"><svg><use href="#sigma"/></svg>汇总计算</button>
        <button class="tool"><svg><use href="#cloud"/></svg>云检查</button>
        <button class="tool" disabled><svg><use href="#flat"/></svg>平齐板顶</button>
        <button class="tool"><svg><use href="#bino"/></svg>查找图元</button>
        <button class="tool"><svg><use href="#glass"/></svg>查看钢筋量</button>
        <button class="tool" disabled><svg><use href="#batch"/></svg>批量选择</button>
        <svg class="more"><use href="#more"/></svg>
    </div>
    <div class="group view">
        <button class="tool white"><svg><use href="#cube"/></svg>三维<i class="caret split"></i></button>
        <button class="tool"><svg><use href="#topview"/></svg>俯视<i class="caret split"></i></button>
        <button class="tool on"><svg><use href="#orbit"/></svg>动态观察</button>
        <button class="tool" disabled><svg><use href="#part3d"/></svg>局部三维</button>
        <span class="sep"></span>
        <button class="tool"><svg><use href="#full"/></svg>全屏</button>
        <button class="tool"><svg><use href="#zoom"/></svg>缩放<i class="caret split"></i></button>
        <button class="tool"><svg><use href="#pan"/></svg>平移<i class="caret split"></i></button>
        <button class="tool"><svg><use href="#screenrot"/></svg>屏幕旋转<i class="caret"></i></button>
        <span class="sep"></span>
        <button class="tool"><svg><use href="#floors"/></svg>选择楼层</button>
        <svg class="more"><use href="#more"/></svg>
    </div>
</div>

<main>
    <aside>
        <h2>模块导航栏
            <svg viewBox="0 0 24 9"><path d="M1.500.500h4v4h-4zM0 5h7M3.500 5v4M16 .5l8 8M24 .5l-8 8"/></svg>
        </h2>
        <div class="panel">
            <button class="tab">工程设置</button>
            <button class="tab">绘图输入</button>
            <div class="expand">
                <svg viewBox="0 0 40 16"><g stroke="#000" stroke-width="3"><path d="M0 5h9M4.500 1v9M7 11h9M11.500 7v9M23 5h9M30 11h9"/></g><g stroke="#0a9a8c"><path d="M1 5h7M4.500 2v7M8 11h7M11.500 8v7M24 5h7M31 11h7"/></g></svg>
            </div>
            <div class="treebox">
                <ul class="tree">
                    <li><span><svg><use href="#t-link"/></svg>连梁<small>(G)</small></span></li>
                    <li><span><svg><use href="#t-lintel"/></svg>过梁<small>(G)</small></span></li>
                    <li><span><svg><use href="#t-hole"/></svg>带形洞</span></li>
                    <li class="end"><span><svg><use href="#t-window"/></svg>带形窗</span></li>
                    <li class="dir"><svg class="fold" viewBox="0 0 10 6"><path d="M1 1l4 4 4-4"/></svg><span><svg><use href="#t-open"/></svg>梁</span></li>
                    <li><span><svg><use href="#t-beam"/></svg>梁<small>(L)</small></span></li>
                    <li class="end"><span><svg><use href="#t-ring"/></svg>圈梁<small>(E)</small></span></li>
                    <li class="dir"><svg class="fold" viewBox="0 0 10 6"><path d="M1 1l4 4 4-4"/></svg><span><svg><use href="#t-open"/></svg>板</span></li>
                    <li><span><svg><use href="#t-slab"/></svg>现浇板<small>(B)</small></span></li>
                    <li><span><svg><use href="#t-spiral"/></svg>螺旋板<small>(B)</small></span></li>
                    <li><span><svg><use href="#t-cap"/></svg>柱帽<small>(V)</small></span></li>
                    <li><span><svg><use href="#t-slabhole"/></svg>板洞<small>(N)</small></span></li>
                    <li><span><svg><use href="#t-force"/></svg>板受力筋<small>(S)</small></span></li>
                    <li><span><svg><use href="#t-neg"/></svg>板负筋<small>(F)</small></span></li>
                    <li class="end"><span><svg><use href="#t-strip"/></svg>楼层板带<small>(H)</small></span></li>
                    <li class="dir"><svg class="fold" viewBox="0 0 10 6"><path d="M1 1l4 4 4-4"/></svg><span><svg><use href="#t-open"/></svg>基础</span></li>
                    <li><span><svg><use href="#t-fbeam"/></svg>基础梁<small>(F)</small></span></li>
                    <li><span><svg><use href="#t-raft"/></svg>筏板基础<small>(M)</small></span></li>
                    <li><span><svg><use href="#t-pit"/></svg>集水坑<small>(K)</small></span></li>
                    <li><span><svg><use href="#t-pier"/></svg>柱墩<small>(Y)</small></span></li>
                    <li><span><svg><use href="#t-main"/></svg>筏板主筋<small>(R)</small></span></li>
                    <li><span><svg><use href="#t-neg"/></svg>筏板负筋<small>(X)</small></span></li>
                    <li><span><svg><use href="#t-found"/></svg>独立基础<small>(P)</small></span></li>
                    <li><span><svg><use href="#t-stripf"/></svg>条形基础<small>(T)</small></span></li>
                    <li><span class="sel"><svg><use href="#t-pilecap"/></svg>桩承台<small>(V)</small></span></li>
                    <li><span><svg><use href="#t-fbeam"/></svg>承台梁<small>(F)</small></span></li>
                    <li><span><svg><use href="#t-pile"/></svg>桩<small>(U)</small></span></li>
                    <li class="end"><span><svg><use href="#t-strip"/></svg>基础板带<small>(W)</small></span></li>
                    <li class="dir"><svg class="fold shut" viewBox="0 0 10 10"><path d="M3 1l4 4-4 4"/></svg><span><svg><use href="#t-shut"/></svg>其它</span></li>
                    <li class="dir"><svg class="fold" viewBox="0 0 10 6"><path d="M1 1l4 4 4-4"/></svg><span><svg><use href="#t-open"/></svg>自定义</span></li>
                    <li><span><svg><use href="#t-main"/></svg>自定义点</span></li>
                </ul>
                <div class="vscroll">
                    <svg viewBox="0 0 10 6"><path d="M1 5l4-4 4 4"/></svg>
                    <div class="track"><div class="thumb"></div></div>
                    <svg viewBox="0 0 10 6"><path d="M1 1l4 4 4-4"/></svg>
                </div>
            </div>
            <button class="tab">单构件输入</button>
            <button class="tab">报表预览</button>
        </div>
    </aside>

    <section class="work">
        <div class="bars">
            <div class="bar">
                <div class="group">
                    <span class="dots"></span>
                    <button class="tool"><svg><use href="#brush"/></svg>删除</button>
                    <span class="sep"></span>
                    <button class="tool"><svg><use href="#copy"/></svg>复制</button>
                    <button class="tool"><svg><use href="#mirror"/></svg>镜像</button>
                    <span class="sep"></span>
                    <button class="tool"><svg><use href="#move"/></svg>移动</button>
                    <button class="tool"><svg><use href="#rotate"/></svg>旋转</button>
                    <span class="sep"></span>
                    <button class="tool" disabled><svg><use href="#extend"/></svg>延伸</button>
                    <button class="tool" disabled><svg><use href="#trim"/></svg>修剪</button>
                    <span class="sep"></span>
                    <button class="tool" disabled><svg><use href="#break"/></svg>打断</button>
                    <button class="tool" disabled><svg><use href="#join"/></svg>合并</button>
                    <button class="tool" disabled><svg><use href="#split"/></svg>分割</button>
                    <span class="sep"></span>
                    <button class="tool"><svg><use href="#align"/></svg>对齐<i class="caret"></i></button>
                    <button class="tool"><svg><use href="#offset"/></svg>偏移</button>
                    <button class="tool" disabled><svg><use href="#stretch"/></svg>拉伸</button>
                    <span class="sep"></span>
                    <button class="tool" disabled><svg><use href="#grip"/></svg>设置夹点</button>
                </div>
            </div>
            <div class="bar">
                <div class="group">
                    <span class="dots"></span>
                    <select class="short" aria-label="楼层"><option>基础层</option></select>
                    <select aria-label="构件类别"><option>基础</option></select>
                    <select aria-label="构件类型"><option>桩承台</option></select>
                    <select aria-label="构件名称"><option>CT-105</option></select>
                    <select aria-label="范围"><option>整体</option></select>
                    <span class="sep"></span>
                    <button class="tool"><svg><use href="#prop"/></svg>属性</button>
                    <button class="tool on"><svg><use href="#pen"/></svg>编辑钢筋</button>
                    <button class="tool"><svg><use href="#list"/></svg>构件列表</button>
                    <button class="tool"><svg><use href="#pick"/></svg>拾取构件</button>
                </div>
                <div class="group">
                    <span class="dots"></span>
                    <button class="tool"><svg><use href="#ax2"/></svg>两点</button>
                    <button class="tool"><svg><use href="#axpar"/></svg>平行</button>
                    <button class="tool"><svg><use href="#axang"/></svg>点角<i class="caret split"></i></button>
                    <button class="tool"><svg><use href="#ax3"/></svg>三点辅轴<i class="caret split"></i></button>
                    <button class="tool"><svg><use href="#brush"/></svg>删除辅轴</button>
                    <button class="tool"><svg><use href="#dim"/></svg>长度标注<i class="caret split"></i></button>
                </div>
            </div>
            <div class="bar">
                <div class="group">
                    <span class="dots"></span>
                    <button class="tool"><svg><use href="#arrow"/></svg>选择<i class="caret split"></i></button>
                    <span class="sep"></span>
                    <button class="tool"><svg><use href="#point"/></svg>点</button>
                    <button class="tool"><svg><use href="#rotpt"/></svg>旋转点</button>
                    <span class="sep"></span>
                    <button class="tool" disabled><svg><use href="#line"/></svg>直线</button>
                    <button class="tool" disabled><svg><use href="#arc"/></svg>三点画弧<i class="caret split"></i></button>
                    <select class="boxed" disabled aria-label="弧参数"><option></option></select>
                    <button class="tool" disabled><svg><use href="#rect"/></svg>矩形</button>
                    <span class="sep"></span>
                    <button class="tool"><svg><use href="#smart"/></svg>智能布置<i class="caret"></i></button>
                    <span class="sep"></span>
                    <button class="tool" disabled><svg><use href="#rebar"/></svg>调整钢筋方向</button>
                    <button class="tool" disabled><svg><use href="#strong"/></svg>编辑承台加强筋</button>
                    <button class="tool"><svg><use href="#check"/></svg>查改标注<i class="caret split"></i></button>
                    <button class="tool"><svg><use href="#cap"/></svg>应用到同名承台</button>
                    <button class="tool"><svg><use href="#slope"/></svg>调整承台放坡</button>
                </div>
                <div class="group stub"><span class="dots"></span></div>
            </div>
        </div>

        <svg class="scene" viewBox="259 168 1107 305" preserveAspectRatio="xMinYMin slice" shape-rendering="crispEdges">
            <rect x="259" y="168" width="1107" height="305" fill="#000"/>
            <!-- walls behind -->
            <path d="M259 168h153l-7 4-121 26 13 118-38 4z" fill="#7f9349"/>
            <path d="M274 249l15-2v3l-14 1.500zM279 289l15-2 1 7-15 2z" fill="#a0b95a"/>
            <path d="M259 168h5.500l17 150-22.500 3z" fill="#4b0096"/>
            <path d="M259 252l8 68-8 1z" fill="#5a00b4"/>
            <!-- pile cap at the back -->
            <path d="M342 201l298-33h305l8 76-598 66z" fill="#5b5a00"/>
            <path d="M858 168h87l8 76-86 10z" fill="#555400"/>
            <path d="M284 198l58 3 13 109-58 6z" fill="#515000"/>
            <path d="M284 198l121-26 7-4h228l-298 33z" fill="#747400"/>
            <path d="M474 172l51-4h62l-113 13z" fill="#5b5a00"/>
            <path d="M463 182l11-10v9z" fill="#494800"/>
            <!-- axis grid, upper right -->
            <g fill="none" stroke="#008000">
                <path d="M948 200l300-31M950 215l416-45M953 230l413-45M992 250l21-3M1342 212l24-4M1131 168l-53 48M1164 168l-64 59M1301 192l-16 15M1067 204l60-6M1060 210l96-14M1090 212h48M1275 193l49-2"/>
                <circle cx="1117" cy="181" r="12"/>
                <circle cx="272" cy="406" r="12"/>
                <circle cx="272" cy="439" r="12"/>
                <circle cx="742" cy="388" r="12"/>
                <path d="M769 375l19-2M755 386l42-4M752 392l48-5"/>
            </g>
            <path d="M953 230l413-45" stroke="#f00" stroke-dasharray="3 16"/>
            <path d="M992 245l28-3M1339 207l27-3M1341 229l25-2M1078 216l-16 14" stroke="#f00"/>
            <g class="tag">
                <text x="1117" y="186">7</text>
                <text x="1110" y="208">300</text>
                <text x="1308" y="176">3300</text>
                <text x="1346" y="197" transform="rotate(-90 1346 197)" dy="5">2400</text>
                <text x="272" y="411">0</text>
                <text x="272" y="444">A1</text>
                <text x="742" y="393">A1</text>
            </g>
            <path d="M1067 204l60-6M1342 212l24-4M1090 205h40" stroke="#008000"/>
            <!-- right beams -->
            <path d="M980 270l309-33 4 37 62-8 8 71-75 8-55-44-213 23-40 4z" fill="#868686"/>
            <path d="M1028 234l310-33-49 44-309 33-16 14-10-5 40-24z" fill="#adadad"/>
            <path d="M1338 201l4 37-49 44-4-37z" fill="#6f6f6f"/>
            <path d="M1293 282l49-44 24-3v30l-11 9z" fill="#adadad"/>
            <path d="M1355 274l11-9v68l-3 4z" fill="#757575"/>
            <!-- pile under the beam -->
            <path d="M478 412l149-17 6 66-110 12h-39z" fill="#5b5a00"/>
            <path d="M627 399l14-14 7 63-15 13z" fill="#4b4a00"/>
            <path d="M437 388l220-30-30 40-149 17z" fill="#3b3900"/>
            <path d="M643 365l14-5-30 38z" fill="#2f2d00"/>
            <!-- main beam -->
            <path d="M259 350l690-77 17 19-20 42-687 72z" fill="#868686"/>
            <path d="M259 318l733-80-44 42-689 77z" fill="#adadad"/>
            <path d="M992 238l2 26-30 28-16-10 1-6z" fill="#6f6f6f"/>
            <!-- front pile cap -->
            <path d="M756 334l257-30-25 64-186 21z" fill="#434200"/>
            <path d="M1013 306l25-23-31 68-19 17z" fill="#3a3800"/>
            <path d="M756 334l26-24 256-27-25 23z" fill="#747400"/>
            <path d="M259 406l508-54" stroke="#f00" stroke-width="1"/>
            <path d="M259 440l541-58M435 421l42-37M497 414l42-37M559 407l42-37" stroke="#f00"/>
            <!-- axis grid, lower right -->
            <g class="tag">
                <text x="1186" y="341" transform="rotate(-90 1186 341)" dy="5">450</text>
                <text x="1211" y="319" transform="rotate(-90 1211 319)" dy="5">3400</text>
                <text x="1225" y="312" transform="rotate(-90 1225 312)" dy="5">360</text>
                <text x="986" y="271" transform="rotate(-90 986 271)" dy="5" class="dim">433</text>
            </g>
            <path d="M1020 323l346-36M1009 349l331-37M997 360l369-40M992 365l320-35M1170 308l-42 37M1232 302l-29 25M1161 345l46-2M1165 339h40M1104 347l47-2M1178 328h47M1169 308h24" fill="none" stroke="#008000"/>
            <path d="M1020 323l213-22M997 360l369-40" stroke="#f00" stroke-dasharray="4 12"/>
            <path d="M1326 315l40-4M1300 327l66-7M1305 331l61-7M1366 279l-52 46" stroke="#f00"/>
            <!-- selected rebars -->
            <path d="M615 309l423-46M609 314l424-46M1008 270l5-4" stroke="#fff" stroke-width="2"/>
            <!-- orbit handle -->
            <g fill="none" stroke="#fff" stroke-opacity=".5" shape-rendering="auto">
                <circle cx="812" cy="320" r="135.500"/>
                <circle cx="812" cy="185" r="8.500"/>
                <circle cx="812" cy="456" r="8.500"/>
                <circle cx="676.500" cy="320" r="8.500"/>
                <circle cx="947.500" cy="320" r="8.500"/>
            </g>
            <!-- ucs -->
            <path d="M314 422l-5-40" stroke="#0080ff" stroke-width="4"/>
            <path d="M308 373l6 13h-10z" fill="#0080ff"/>
            <path d="M296 370h8l-9 9h9" fill="none" stroke="#46688c"/>
            <path d="M315 422l38-3" stroke="#f00" stroke-width="4"/>
            <path d="M363 418l-13-5 2 10zM352 413l9 9M361 413l-9 9" fill="#f00" stroke="#f00"/>
            <path d="M327 413l4 4 4-4M331 417v5" fill="none" stroke="#0f0"/>
            <path d="M312 420h5v4h-5z" fill="#0c3"/>
        </svg>

        <div class="bar snap">
            <div class="group">
                <span class="dots"></span>
                <button class="tool"><svg><use href="#cross"/></svg>交点</button>
                <button class="tool on"><svg><use href="#perp"/></svg>垂点</button>
                <button class="tool on"><svg><use href="#mid"/></svg>中点</button>
                <button class="tool"><svg><use href="#vertex"/></svg>顶点</button>
                <button class="tool"><svg><use href="#coord"/></svg>坐标</button>
            </div>
            <div class="group">
                <span class="dots"></span>
                <select class="short" aria-label="偏移方式"><option>不偏移</option></select>
                <span class="sep"></span>
                <label for="ox">X=</label><span class="spin"><input id="ox" value="0" disabled><i></i></span><span class="unit">mm</span>
                <label for="oy">Y=</label><span class="spin"><input id="oy" value="0" disabled><i></i></span><span class="unit">mm</span>
                <span class="sep"></span>
                <input type="checkbox" id="rot"><label for="rot" class="dark">旋转</label>
                <span class="spin wide"><input value="0.000" disabled aria-label="角度"><i></i></span><span class="unit">°</span>
            </div>
        </div>

        <div class="bottom">
            <div class="rail"><svg viewBox="0 0 11 11"><path d="M.5.500h10v10H.5z" fill="#fff" stroke="#333"/><path d="M1 1h9v2H1z" fill="#b66"/><path d="M2 3l7 7M9 3l-7 7" stroke="#222" stroke-width="1.500"/></svg></div>
            <div class="detail">
                <div class="bar">
                    <button class="tool nav" disabled aria-label="首条"><svg><use href="#first"/></svg></button>
                    <button class="tool nav" disabled aria-label="上一条"><svg><use href="#prev"/></svg></button>
                    <button class="tool nav" disabled aria-label="下一条"><svg><use href="#next"/></svg></button>
                    <button class="tool nav" disabled aria-label="末条"><svg><use href="#last"/></svg></button>
                    <span class="sep"></span>
                    <button class="tool nav" disabled aria-label="上移"><svg><use href="#up"/></svg></button>
                    <button class="tool nav" disabled aria-label="下移"><svg><use href="#down"/></svg></button>
                    <span class="sep"></span>
                    <button class="tool" disabled><svg><use href="#insert"/></svg>插入</button>
                    <button class="tool" disabled><svg><use href="#delrow"/></svg>删除</button>
                    <button class="tool" disabled><svg><use href="#scale"/></svg>缩尺配筋</button>
                    <button class="tool" disabled><svg><use href="#info"/></svg>钢筋信息</button>
                    <button class="tool" disabled><svg><use href="#lib"/></svg>钢筋图库</button>
                    <button class="tool"><svg><use href="#other"/></svg>其他<i class="caret"></i></button>
                    <button class="tool">关闭</button>
                    <span class="sep"></span>
                    <span class="total">单构件钢筋总重(kg)：0</span>
                </div>
                <div class="sheet">
                    <table>
                        <colgroup><col class="w33"><col class="w73"><col class="w56"><col class="w36"><col class="w33"><col class="w201"><col class="w166"><col class="w156"><col class="w39"><col class="w168"><col class="w39"><col class="w49"><col class="w56"></colgroup>
                        <thead>
                            <tr><th></th><th>筋号</th><th>直径<small>(mm)</small></th><th>级别</th><th>图号</th><th>图形</th><th>计算公式</th><th>公式描述</th><th>长度<small>(</small></th><th class="cur">根数</th><th>搭接</th><th>损耗<small>(%)</small></th><th>单重<small>(kg)</small></th></tr>
                        </thead>
                        <tbody>
                            <tr><th><small>1*</small></th><td class="edit"></td><td></td><td></td><td></td><td></td><td></td><td></td><td></td><td class="cur"></td><td></td><td></td><td></td></tr>
                        </tbody>
                    </table>
                    <div class="hscroll">
                        <svg viewBox="0 0 6 10"><path d="M5 1L1 5l4 4"/></svg>
                        <div class="track"><div class="thumb"></div></div>
                        <svg viewBox="0 0 6 10"><path d="M1 1l4 4-4 4"/></svg>
                    </div>
                </div>
            </div>
        </div>
    </section>
</main>

<footer class="status">
    <span class="s-xy"><small>X=166794 Y=19542</small></span><span class="s-h">层高<small>:2.15m</small></span><span class="s-b">底标高<small>:-2.2m</small></span><span class="s-n"><small>0</small></span><span class="s-fill"></span><span class="s-fps"><small>158.7 FPS</small></span>
</footer>

<div class="taskbar">
    <button class="start" aria-label="开始"><svg class="i16"><use href="#win"/></svg></button>
    <label class="search"><svg class="i22"><use href="#ring"/></svg><input type="text" placeholder="在这里输入你要搜索的内容"><svg class="i16"><use href="#micline"/></svg></label>
    <button class="task" aria-label="任务视图"><svg class="i22"><use href="#taskview"/></svg></button>
    <button class="task" aria-label="风扇"><svg class="i22"><use href="#fan"/></svg></button>
    <button class="task" aria-label="浏览器"><svg class="i22"><use href="#ieface"/><use href="#iering"/></svg></button>
    <button class="task" aria-label="广联达"><svg class="i22"><use href="#gline"/></svg></button>
    <button class="task" aria-label="Edge"><svg class="i22"><use href="#edge"/></svg></button>
    <button class="task ie" aria-label="Internet Explorer"><svg class="i24b"><use href="#ieface"/><use href="#iering" class="gold"/></svg></button>
    <button class="task run" aria-label="文件资源管理器"><svg class="i22"><use href="#files"/></svg></button>
    <button class="task run" aria-label="G"><svg class="i24b"><use href="#gfull"/></svg></button>
    <button class="task run green" aria-label="安全浏览器"><svg class="i22"><circle cx="11" cy="11" r="10" fill="#3fae2a"/><use href="#ieface"/><use href="#iering" class="lime"/></svg></button>
    <button class="task run active" aria-label="GGJ2013"><svg class="i24b"><use href="#app"/></svg></button>
    <div class="tray">
        <span>链接</span>
        <svg class="chev" viewBox="0 0 12 7"><path d="M1 6l5-5 5 5"/></svg>
        <svg class="i16"><use href="#plug"/></svg>
        <svg class="i14"><use href="#wifi"/></svg>
        <svg class="i18"><use href="#speaker"/></svg>
        <svg class="i24"><use href="#touchkb"/></svg>
        <span>中</span>
        <svg class="i16"><use href="#sogou"/></svg>
        <time>11:36<br>2018/6/5</time>
        <svg class="i16 note"><use href="#note"/></svg>
    </div>
</div>
</body>
</html>
```
FILE: styles.css
```css
* {
    box-sizing: border-box;
}

body {
    margin: 0;
    height: 100vh;
    display: flex;
    flex-direction: column;
    overflow: hidden;
    background: #f0f0f0;
    color: #000;
    font: 12px/16px "Noto Sans", "Noto Sans CJK SC", sans-serif;
}

button, select, input {
    font: inherit;
    color: inherit;
    border: 0;
    padding: 0;
    margin: 0;
    background: none;
    border-radius: 0;
}

svg {
    flex: none;
    display: block;
}

small {
    font: 10px "DejaVu Sans Mono", monospace;
}

.sprite {
    width: 0;
    height: 0;
    position: absolute;
}

.i14 { width: 14px; height: 14px; }
.i16 { width: 16px; height: 16px; }
.i18 { width: 18px; height: 14px; }
.i22 { width: 22px; height: 22px; }
.i24 { width: 24px; height: 14px; }
.i24b { width: 24px; height: 24px; }

/* title */
.titlebar {
    height: 24px;
    flex: none;
    display: flex;
    align-items: center;
    padding-left: 2px;
    background: #fff;
}

h1 {
    flex: 1;
    margin: 0 0 0 5px;
    font-size: 12px;
    font-weight: normal;
    white-space: nowrap;
}

.winbtns {
    display: flex;
    padding-right: 2px;
}

.winbtns button {
    width: 46px;
    height: 24px;
    display: flex;
    align-items: center;
    justify-content: center;
}

.winbtns svg {
    width: 11px;
    height: 11px;
    fill: none;
    stroke: #000;
}

.ball {
    position: absolute;
    top: -26px;
    left: 1013px;
    width: 45px;
    height: 45px;
    padding-top: 22px;
    border: 2px solid #d5d9d5;
    border-radius: 50%;
    background: #3cc45c;
    box-shadow: 0 1px 4px #777;
    color: #fff;
    font-weight: bold;
    font-size: 13px;
    line-height: 16px;
    text-align: center;
}

.ime {
    position: absolute;
    top: 14px;
    left: 690px;
    width: 206px;
    height: 24px;
    display: flex;
    align-items: center;
    gap: 6px;
    border: 1px solid #b4c3d6;
    background: #fff;
    color: #1b75c9;
    font-size: 14px;
}

.ime b {
    width: 16px;
}

.ime .logo {
    width: 28px;
    height: 26px;
    margin-left: -2px;
}

/* menu */
.menubar {
    height: 28px;
    flex: none;
    display: flex;
    align-items: center;
    white-space: nowrap;
}

.menus {
    width: 937px;
    display: flex;
    align-items: center;
    padding-left: 2px;
}

.menus > button:not(.tool) {
    padding: 0 6px 0 5px;
}

.notice {
    width: 187px;
    height: 28px;
    line-height: 28px;
    text-align: center;
    background: linear-gradient(#fafafa, #f2f2f2);
}

.notice a {
    color: #360;
    text-decoration: none;
}

.account {
    flex: 1;
    height: 28px;
    display: flex;
    align-items: center;
    gap: 6px;
    margin-left: 2px;
    background: linear-gradient(#fafafa, #f2f2f2);
}

.more {
    width: 9px;
    height: 6px;
    margin: 0 2px 12px auto;
}

/* tool bars */
.bar {
    display: flex;
    align-items: center;
    white-space: nowrap;
}

.bar.main {
    height: 32px;
    flex: none;
    gap: 2px;
    padding-left: 1px;
}

.group {
    height: 26px;
    display: flex;
    align-items: center;
    padding-right: 2px;
    border-radius: 3px;
    background: linear-gradient(#fdfdfd, #f1f1f1);
}

.main .group {
    height: 30px;
}

.file { width: 150px; }
.define { width: 549px; }
.view { flex: 1; }

.define .more, .file .more {
    margin-right: 0;
}

.file {
    padding-left: 1px;
}

.tool {
    height: 24px;
    flex: none;
    display: flex;
    align-items: center;
    gap: 4px;
    padding: 0 4px 0 3px;
}

.tool svg {
    width: 16px;
    height: 16px;
}

.tool:disabled {
    color: #838383;
}

.tool.on {
    background: #deebf6;
    box-shadow: inset 0 0 0 1px #0a78d4;
}

.tool.white {
    background: #fff;
}

.caret {
    width: 6px;
    margin: 1px -1px 0 -1px;
    border: 3px solid transparent;
    border-top-color: currentColor;
    border-bottom: 0;
}

.caret.split {
    margin: 1px 0 0 2px;
}

.sep {
    width: 1px;
    height: 14px;
    margin: 0 2px 0 3px;
    background: #bbb;
}

.dots {
    width: 2px;
    height: 14px;
    margin: 0 2px 0 3px;
    background: repeating-linear-gradient(#b5b5b5 0 2px, transparent 2px 4px);
}

.work select {
    width: 70px;
    height: 22px;
    margin-right: 2px;
    padding-left: 2px;
    appearance: none;
    background:
        linear-gradient(45deg, transparent 50%, #000 50%) right 6px center / 3px 3px no-repeat,
        linear-gradient(135deg, #000 50%, transparent 50%) right 3px center / 3px 3px no-repeat,
        linear-gradient(#f4f4f4, #f4f4f4) right / 12px 22px no-repeat,
        #fff;
}

.work select.short {
    width: 59px;
}

.work select.boxed {
    width: 56px;
    margin: 0 2px 0 -1px;
    border: 1px solid #888;
    opacity: 1;
}

/* body */
main {
    flex: 1;
    min-height: 0;
    display: grid;
    grid-template-columns: 254px minmax(0, 1fr);
    column-gap: 5px;
}

aside {
    min-height: 0;
    display: flex;
    flex-direction: column;
    padding-bottom: 1px;
}

h2 {
    flex: none;
    height: 15px;
    display: flex;
    align-items: center;
    justify-content: space-between;
    margin: 0;
    padding-right: 5px;
    background: #0054e3;
    color: #fff;
    font-size: 13px;
    font-weight: normal;
    line-height: 15px;
}

h2 svg {
    width: 24px;
    height: 9px;
    fill: none;
    stroke: #fff;
}

.panel {
    flex: 1;
    min-height: 0;
    display: flex;
    flex-direction: column;
    margin-top: 1px;
    border: 1px solid #989898;
}

.tab {
    height: 22px;
    flex: none;
    padding-top: 2px;
    border-bottom: 1px solid #989898;
    text-align: center;
}

.tab:last-child {
    border-bottom: 0;
}

.expand {
    height: 27px;
    flex: none;
    padding: 7px 6px;
    background: linear-gradient(#fafafa, #eee);
}

.expand svg {
    width: 40px;
    height: 16px;
}

.treebox {
    flex: 1;
    min-height: 0;
    display: flex;
    margin: 0 0 0 1px;
    padding: 1px 2px 1px 0;
    border: 1px solid #7f858c;
    border-bottom: 2px solid #989898;
    background: #fff;
}

.tree {
    flex: 1;
    margin: 0;
    padding: 0;
    overflow: hidden;
    list-style: none;
}

.tree li {
    height: 16px;
    display: flex;
    align-items: center;
    padding-left: 40px;
    background:
        repeating-linear-gradient(#777 0 1px, transparent 1px 2px) 12px 0 / 1px 16px no-repeat,
        repeating-linear-gradient(#777 0 1px, transparent 1px 2px) 31px 0 / 1px 16px no-repeat,
        repeating-linear-gradient(90deg, #777 0 1px, transparent 1px 2px) 31px 8px / 11px 1px no-repeat;
}

.tree li.end {
    background:
        repeating-linear-gradient(#777 0 1px, transparent 1px 2px) 12px 0 / 1px 16px no-repeat,
        repeating-linear-gradient(#777 0 1px, transparent 1px 2px) 31px 0 / 1px 8px no-repeat,
        repeating-linear-gradient(90deg, #777 0 1px, transparent 1px 2px) 31px 8px / 11px 1px no-repeat;
}

.tree li.dir {
    gap: 4px;
    padding-left: 7px;
    background: none;
}

.tree li span {
    height: 16px;
    display: flex;
    align-items: center;
    padding: 0 4px 0 2px;
}

.tree .sel {
    background: #d9d9d9;
}

.tree span svg {
    width: 16px;
    height: 16px;
    margin-right: 5px;
}

.fold {
    width: 10px;
    height: 10px;
    fill: none;
    stroke: #444;
    stroke-width: 2;
}

.fold.shut {
    stroke: #999;
}

.vscroll {
    width: 15px;
    display: flex;
    flex-direction: column;
    align-items: center;
    padding: 6px 0;
    background: #f0f0f0;
}

.vscroll svg, .hscroll svg {
    width: 10px;
    height: 6px;
    fill: none;
    stroke: #505050;
    stroke-width: 2;
}

.track {
    flex: 1;
    display: flex;
}

.vscroll .track {
    width: 15px;
    flex-direction: column;
    padding: 174px 0 45px;
}

.thumb {
    flex: 1;
    background: #cdcdcd;
}

.work {
    min-height: 0;
    display: grid;
    grid-template-columns: minmax(0, 1fr);
    grid-template-rows: auto minmax(0, 3fr) auto minmax(0, 2fr);
}

.bars {
    display: flex;
    flex-direction: column;
    gap: 2px;
    padding: 0 0 2px 1px;
}

.bars .bar {
    gap: 2px;
}

.stub {
    width: 30px;
    margin-left: 24px;
}

.scene {
    width: 100%;
    height: 100%;
}

.tag {
    fill: #e8e8e8;
    font: 14px "Liberation Sans", sans-serif;
    text-anchor: middle;
}

.tag .dim {
    fill: #555;
}

/* snap row */
.snap {
    height: 30px;
    gap: 2px;
    padding-left: 212px;
}

.snap label, .unit {
    padding: 0 2px;
    color: #6d6d6d;
}

.snap label.dark {
    padding: 0 5px;
    color: #000;
}

.spin {
    width: 58px;
    height: 23px;
    display: flex;
    align-items: center;
    border: 1px solid #7a7a7a;
    background: #f6f6f6;
}

.spin.wide {
    width: 69px;
}

.spin input {
    flex: 1;
    min-width: 0;
    color: #6d6d6d;
    text-align: right;
}

.spin i {
    width: 6px;
    height: 15px;
    margin: 0 3px 0 9px;
    background:
        conic-gradient(from 135deg at 50% 0, #555 0 90deg, transparent 0) top / 6px 3px no-repeat,
        conic-gradient(from -45deg at 50% 100%, #555 0 90deg, transparent 0) bottom / 6px 3px no-repeat;
}

.snap input[type=checkbox] {
    width: 11px;
    height: 11px;
    margin: 0 3px 0 1px;
    appearance: none;
    border: 1px solid #999;
    background: #fafafa;
}

/* rebar sheet */
.bottom {
    display: flex;
    min-height: 0;
    padding: 4px 1px 2px 0;
}

.rail {
    width: 12px;
    flex: none;
    padding: 0 1px;
    background:
        linear-gradient(90deg, transparent 2px, #f0f0f0 2px 4px, transparent 4px) 2px 14px / 6px 100% no-repeat,
        repeating-linear-gradient(#c0c0c0 0 2px, transparent 2px 5px) 2px 14px / 6px 100% no-repeat;
}

.rail svg {
    width: 11px;
    height: 11px;
}

.detail {
    flex: 1;
    min-width: 0;
    display: flex;
    flex-direction: column;
}

.detail .bar {
    height: 26px;
    flex: none;
    background: linear-gradient(#fdfdfd, #f1f1f1);
}

.nav {
    padding: 0 4px;
}

.total {
    padding: 0 3px;
}

.sheet {
    flex: 1;
    min-height: 0;
    display: flex;
    flex-direction: column;
    justify-content: space-between;
    overflow: hidden;
    padding: 1px;
    border: 1px solid #a0a0a0;
    background: #fff;
}

table {
    width: 1105px;
    table-layout: fixed;
    border-collapse: collapse;
}

.w33 { width: 33px; }
.w36 { width: 36px; }
.w39 { width: 39px; }
.w49 { width: 49px; }
.w56 { width: 56px; }
.w73 { width: 73px; }
.w156 { width: 156px; }
.w166 { width: 166px; }
.w168 { width: 168px; }
.w201 { width: 201px; }

th, td {
    height: 19px;
    padding: 0;
    overflow: hidden;
    border-right: 1px solid #bdbdbd;
    border-bottom: 1px solid #bdbdbd;
    font-weight: normal;
    line-height: 18px;
    white-space: nowrap;
}

thead th {
    background: linear-gradient(#fff, #f0f0f0);
}

tbody th {
    background: #ffd38c;
    color: #508;
}

thead th.cur {
    background: linear-gradient(#f8d79c, #f2c05c);
    color: #508;
}

td.cur {
    background: #d8e9f8;
}

td.edit {
    border-right-color: #000;
}

.hscroll {
    height: 16px;
    flex: none;
    display: flex;
    align-items: center;
    padding: 0 5px;
    background: #f0f0f0;
}

.hscroll svg {
    width: 6px;
    height: 10px;
}

.hscroll .track {
    height: 16px;
    padding: 0 475px 0 6px;
}

/* status */
.status {
    height: 22px;
    flex: none;
    display: flex;
    gap: 2px;
    padding: 2px 0 1px;
    background: #fff;
}

.status span {
    padding: 0 1px;
    border: 1px solid #d8d8d8;
    background: linear-gradient(#fdfdfd, #f0f0f0);
    line-height: 17px;
    white-space: nowrap;
}

.s-xy { width: 148px; }
.s-h { width: 78px; }
.s-b { width: 98px; }
.s-n { width: 48px; }
.s-fill { flex: 1; }
.s-fps { width: 70px; }

/* windows taskbar */
.taskbar {
    height: 40px;
    flex: none;
    display: flex;
    align-items: center;
    background: #000a0d;
    color: #fff;
}

.start {
    width: 48px;
    height: 40px;
    display: flex;
    align-items: center;
    justify-content: center;
    background: #000;
}

.search {
    width: 344px;
    height: 40px;
    display: flex;
    align-items: center;
    gap: 5px;
    padding: 0 12px 0 9px;
    background: #333;
}

.search input {
    flex: 1;
    font-size: 14px;
}

.search input::placeholder {
    color: #999;
}

.task {
    width: 50px;
    height: 40px;
    display: flex;
    align-items: center;
    justify-content: center;
    color: #e4e4e4;
}

.task.run {
    width: 40px;
    margin: 0 3px 0 6px;
    border: solid transparent;
    border-width: 2px 0;
    border-bottom-color: #76b9ed;
}

.task.run.active {
    width: 48px;
    margin: 0;
    margin-left: 3px;
    background: #43494b;
    background-clip: border-box;
}

.task.ie {
    color: #4db4f0;
}

.gold { color: #f6c433; }
.lime { color: #8ee05a; }

.task.green {
    color: #fff;
}

.tray {
    flex: 1;
    display: flex;
    align-items: center;
    justify-content: flex-end;
    gap: 8px;
    padding-right: 25px;
}

.tray span {
    padding: 0 5px;
}

.chev {
    width: 12px;
    height: 7px;
    margin-right: 2px;
    fill: none;
    stroke: #fff;
    stroke-width: 1.5;
}

.tray time {
    width: 74px;
    text-align: center;
    line-height: 19px;
}

.note {
    margin-left: 4px;
}
```
